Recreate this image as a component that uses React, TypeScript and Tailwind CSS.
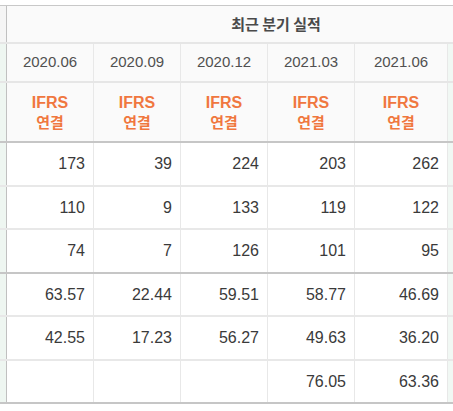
import React from "react";

const dates = ["2020.06", "2020.09", "2020.12", "2021.03", "2021.06"];
const rows: string[][] = [
  ["173", "39", "224", "203", "262"],
  ["110", "9", "133", "119", "122"],
  ["74", "7", "126", "101", "95"],
  ["63.57", "22.44", "59.51", "58.77", "46.69"],
  ["42.55", "17.23", "56.27", "49.63", "36.20"],
  ["", "", "", "76.05", "63.36"],
];
const rowStyles = [
  "h-[44px] border-b-2 border-[#e8e8e8]",
  "h-[43px] border-b-2 border-[#e8e8e8]",
  "h-[44px] border-b-2 border-[#c6c6c6]",
  "h-[43px] border-b-2 border-[#e8e8e8]",
  "h-[44px] border-b-2 border-[#e8e8e8]",
  "h-[43px] border-b-2 border-[#c6c6c6]",
];
const widths = ["w-[87px]", "w-[87px]", "w-[87px]", "w-[87px]", "w-[93px]"];

export default function App() {
  return (
    <div
      className="w-[453px] h-[411px] bg-white overflow-hidden pt-[5px]"
      style={{ fontFamily: '"Liberation Sans", "Noto Sans CJK KR", sans-serif' }}
    >
      <div className="border-t border-[#c8c8c8] w-[453px]">
        {/* title row */}
        <div className="flex h-[38px] border-b-2 border-[#e6e6e6] bg-[#fafafa]">
          <div className="w-[7px] shrink-0 border-r border-[#c0c0c0] bg-[#f5f5f5]" />
          <div
            className="w-[538px] shrink-0 flex items-center justify-center text-[15px] font-bold text-[#4a4a4a]"
            style={{ fontFamily: '"Noto Sans CJK KR", sans-serif' }}
          >
            최근 분기 실적
          </div>
        </div>
        {/* dates row */}
        <div className="flex h-[39px] border-b-2 border-[#e6e6e6] bg-[#fafafa]">
          <div className="w-[7px] shrink-0 border-r border-[#c0c0c0] bg-[#eef6f1]" />
          {dates.map((d, i) => (
            <div
              key={d}
              className={`${widths[i]} shrink-0 border-r border-[#e8e8e8] flex items-center justify-center text-[15px] text-[#505050]`}
            >
              {d}
            </div>
          ))}
          <div className="flex-1 bg-[#f1f8f4]" />
        </div>
        {/* IFRS row */}
        <div className="flex h-[60px] border-b-2 border-[#c6c6c6] bg-[#fafafa]">
          <div className="w-[7px] shrink-0 border-r border-[#c0c0c0] bg-[#eef6f1]" />
          {dates.map((d, i) => (
            <div
              key={d}
              className={`${widths[i]} shrink-0 border-r border-[#e8e8e8] flex flex-col items-center justify-center font-bold text-[#f0773f] leading-[19px] pb-[1px]`}
            >
              <span className="text-[16px]">IFRS</span>
              <span className="text-[15px]" style={{ fontFamily: '"Noto Sans CJK KR", sans-serif' }}>
                연결
              </span>
            </div>
          ))}
          <div className="flex-1 bg-[#f1f8f4]" />
        </div>
        {/* data rows */}
        {rows.map((r, ri) => (
          <div key={ri} className={`flex ${rowStyles[ri]} bg-white`}>
            <div className="w-[7px] shrink-0 border-r border-[#c0c0c0] bg-[#eef6f1]" />
            {r.map((v, i) => (
              <div
                key={i}
                className={`${widths[i]} shrink-0 border-r border-[#e8e8e8] flex items-center justify-end pr-[8px] text-[16px] text-[#3a3a3a]`}
              >
                {v}
              </div>
            ))}
            <div className="flex-1 bg-[#f1f8f4]" />
          </div>
        ))}
      </div>
    </div>
  );
}
